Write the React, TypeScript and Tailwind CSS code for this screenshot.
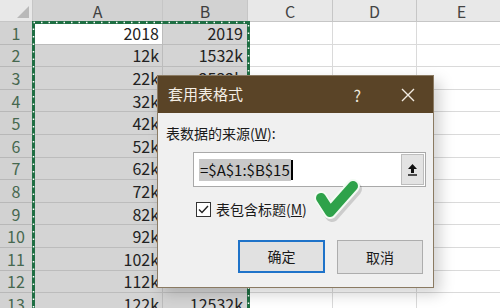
const COLS = [
  { name: "A", w: 130, sel: true },
  { name: "B", w: 85, sel: true },
  { name: "C", w: 85, sel: false },
  { name: "D", w: 84, sel: false },
  { name: "E", w: 90, sel: false },
];

const ROWS = Array.from({ length: 13 }, (_, i) => {
  const n = i + 1;
  if (n === 1) return { n, a: "2018", b: "2019" };
  return { n, a: `${(n - 1) * 10 + 2}k`, b: `${1532 + (n - 2) * 1000}k` };
});

const font = { fontFamily: '"Noto Sans CJK SC", "Noto Sans", sans-serif' };

export default function App() {
  return (
    <div className="relative w-[500px] h-[308px] overflow-hidden bg-white" style={font}>
      {/* sheet */}
      <div className="flex flex-col">
        <div className="flex h-[22px] bg-[#e8e8e8] border-b border-[#c6c6c6]">
          <div className="w-[33px] shrink-0 border-r border-[#c6c6c6] relative">
            <div className="absolute right-[3px] bottom-[3px] w-0 h-0 border-l-[12px] border-l-transparent border-b-[12px] border-b-[#b9b9b9]" />
          </div>
          {COLS.map((c) => (
            <div
              key={c.name}
              style={{ width: c.w }}
              className={`shrink-0 flex items-center justify-center text-[16px] border-r border-[#c6c6c6] ${
                c.sel ? "bg-[#d2d2d2] text-[#3f3f3f]" : "text-[#444]"
              }`}
            >
              {c.name}
            </div>
          ))}
        </div>
        {ROWS.map((r) => (
          <div key={r.n} className="flex h-[22.6px] shrink-0">
            <div className="w-[33px] shrink-0 bg-[#d2d2d2] border-r border-b border-[#b8b8b8] flex items-center justify-center text-[16px] text-[#46684f]">
              {r.n}
            </div>
            <div
              className={`w-[130px] shrink-0 border-r border-b border-[#bcbcbc] flex items-center justify-end pr-[3px] text-[16px] text-[#222] ${
                r.n === 1 ? "bg-white" : "bg-[#d4d4d4]"
              }`}
            >
              {r.a}
            </div>
            <div className="w-[85px] shrink-0 bg-[#d4d4d4] border-r border-b border-[#bcbcbc] flex items-center justify-end pr-[4px] text-[16px] text-[#222]">
              {r.b}
            </div>
            <div className="w-[85px] shrink-0 border-r border-b border-[#dadada]" />
            <div className="w-[84px] shrink-0 border-r border-b border-[#dadada]" />
            <div className="w-[90px] shrink-0 border-b border-[#dadada]" />
          </div>
        ))}
      </div>

      {/* copy marquee */}
      <svg className="absolute left-[31px] top-[20px]" width="220" height="300" viewBox="0 0 220 300">
        <rect x="2.5" y="2.5" width="215" height="310" fill="none" stroke="#1f6e43" strokeWidth="3" />
        <rect x="2.5" y="2.5" width="215" height="310" fill="none" stroke="#ffffff" strokeWidth="1.5" strokeDasharray="1.5 6" />
      </svg>

      {/* dialog */}
      <div className="absolute left-[157px] top-[75px] w-[277px] h-[213px] bg-[#f0f0f0] border border-[#8a7a62] shadow-[6px_6px_14px_rgba(0,0,0,0.18)] flex flex-col">
        <div className="h-[37px] bg-[#5a4427] flex items-center pl-[10px] pr-[18px] text-white">
          <span className="text-[15px] text-[#f4eee6]">套用表格式</span>
          <span className="ml-auto text-[16px] text-[#efe8dc]">?</span>
          <svg className="ml-[40px]" width="14" height="14" viewBox="0 0 14 14">
            <path d="M1 1L13 13M13 1L1 13" stroke="#f2ece2" strokeWidth="1.4" />
          </svg>
        </div>
        <div className="flex-1 px-[8px] pt-[10px]">
          <div className="text-[14px] text-[#1a1a1a] leading-[20px]">
            表数据的来源(<span className="underline">W</span>):
          </div>
          <div className="mt-[9px] ml-[27px] w-[233px] h-[35px] bg-white border border-[#a9a9a9] flex items-center pl-[5px] pr-[1px]">
            <span className="bg-[#c8c8c8] text-[15px] text-[#111] leading-[22px] px-[1px]">=$A$1:$B$15</span>
            <span className="w-[2px] h-[20px] bg-black" />
            <div className="ml-auto w-[23px] h-[31px] bg-[#e3e3e3] border border-[#bdbdbd] flex items-center justify-center">
              <svg width="11" height="13" viewBox="0 0 11 13">
                <path d="M5.5 1L1 6H4V10H7V6H10Z" fill="#111" />
                <rect x="1" y="11.3" width="9" height="1.4" fill="#111" />
              </svg>
            </div>
          </div>
          <div className="mt-[12px] ml-[30px] flex items-center gap-[5px]">
            <div className="w-[15px] h-[15px] border border-[#333] bg-white flex items-center justify-center">
              <svg width="11" height="9" viewBox="0 0 11 9">
                <path d="M1 4.5L4 7.5L10 1" stroke="#222" strokeWidth="1.4" fill="none" />
              </svg>
            </div>
            <span className="text-[14px] text-[#1a1a1a]">
              表包含标题(<span className="underline">M</span>)
            </span>
          </div>
          <div className="mt-[20px] flex justify-end gap-[12px] pr-[2px]">
            <button className="w-[87px] h-[33px] bg-[#e1e1e1] border-2 border-[#1f73c9] text-[14px] text-[#1a1a1a]">
              确定
            </button>
            <button className="w-[86px] h-[34px] bg-[#e1e1e1] border border-[#adadad] text-[14px] text-[#1a1a1a]">
              取消
            </button>
          </div>
        </div>
      </div>

      {/* green check */}
      <svg className="absolute left-[308px] top-[176px]" width="56" height="50" viewBox="0 0 56 50">
        <path d="M13 22L22 36L45 10" stroke="rgba(0,0,0,0.15)" strokeWidth="14" fill="none" strokeLinecap="round" strokeLinejoin="round" transform="translate(2 3)" />
        <path d="M13 22L22 36L45 10" stroke="#f4fbf4" strokeWidth="14" fill="none" strokeLinecap="round" strokeLinejoin="round" />
        <path d="M13 22L22 36L45 10" stroke="#2ea24a" strokeWidth="10" fill="none" strokeLinecap="round" strokeLinejoin="round" />
      </svg>
    </div>
  );
}
